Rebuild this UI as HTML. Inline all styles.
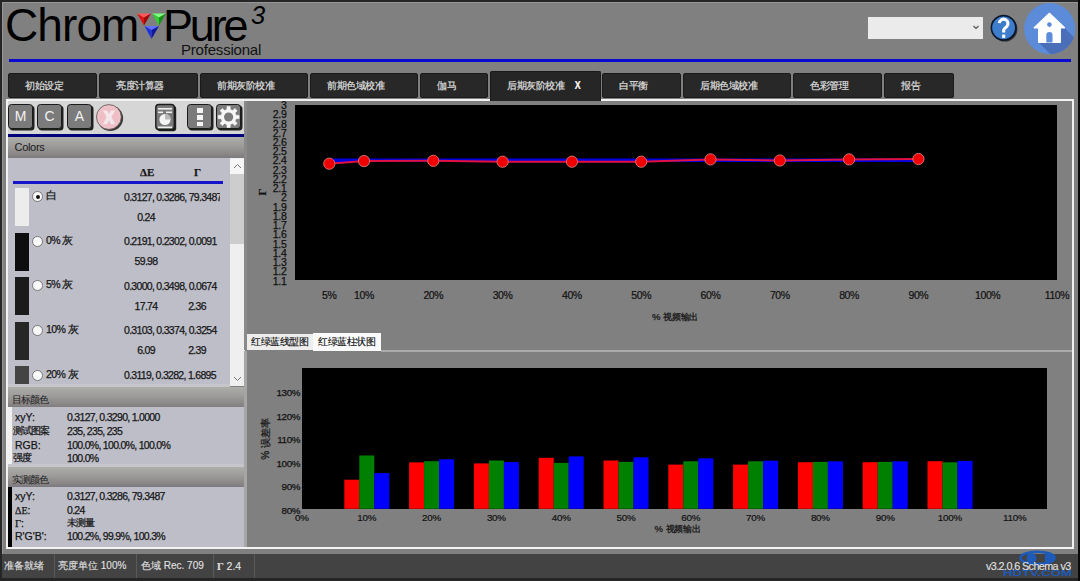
<!DOCTYPE html><html><head><meta charset="utf-8"><style>
*{margin:0;padding:0;box-sizing:border-box}
html,body{width:1080px;height:581px;overflow:hidden;background:#262626;font-family:"Liberation Sans",sans-serif}
.a{position:absolute}
.tab{position:absolute;top:73px;height:25px;background:#282828;border:1px solid #1a1a1a;border-radius:2px;color:#e2e2e2;font-size:10px;line-height:23px;padding-left:16px;white-space:nowrap;letter-spacing:-0.5px;-webkit-text-stroke:0.2px #d8d8d8}
.tab.sel{top:71px;height:29.5px;line-height:27px;background:#262626;z-index:5;border-bottom:none;border-radius:2px 2px 0 0}
.hdr{position:absolute;left:8px;width:237px;height:21px;background:linear-gradient(#adada9 0%,#9c9b9a 45%,#8a8686 82%,#7c7a80 100%);font-size:9.8px;color:#1a1a1a;line-height:25px;padding-left:4px;letter-spacing:-1.1px;white-space:nowrap}
.btn{position:absolute;top:104px;width:25px;height:25px;background:#7b7b7b;border:1.3px solid #1a1a1a;border-radius:3.5px;box-shadow:1.5px 1.5px 0.5px rgba(0,0,0,.85);color:#f2f2f2;font-size:14px;text-align:center;line-height:23px}
.lbl{position:absolute;font-size:10.5px;color:#161616;white-space:nowrap;line-height:12px;-webkit-text-stroke:0.25px #161616}
.num{letter-spacing:-0.7px}
.radio{position:absolute;left:24px;width:11px;height:11px;border-radius:50%;background:#fafafa;border:1px solid #777}
.radio.on::after{content:"";position:absolute;left:2.5px;top:2.5px;width:4px;height:4px;border-radius:50%;background:#111}
.yl{position:absolute;text-align:right;font-size:10.5px;color:#111;line-height:10px;white-space:nowrap;-webkit-text-stroke:0.25px #111}
.xl{position:absolute;width:40px;text-align:center;font-size:10px;color:#111;line-height:10px;white-space:nowrap;-webkit-text-stroke:0.2px #111}
.st{position:absolute;top:554px;height:24px;line-height:24px;color:#e2e2e2;font-size:10px;white-space:nowrap;-webkit-text-stroke:0.15px #d8d8d8}
.sep{position:absolute;top:554px;width:1px;height:24px;background:#5a5a5a}
</style></head><body>
<div class="a" style="left:2px;top:2px;width:1076px;height:552px;background:#808080;border-top:1px solid #969696;border-left:1px solid #969696"></div>
<div class="a" style="left:5px;top:-1px;font-size:46px;color:#000;line-height:52px;letter-spacing:-0.9px">Chrom</div>
<div class="a" style="left:163px;top:-0.5px;font-size:45px;color:#000;line-height:52px;letter-spacing:-3.2px">Pure</div>
<div class="a" style="left:251px;top:1px;font-size:25.5px;font-style:italic;color:#000;line-height:28px">3</div>
<div class="a" style="left:181px;top:41px;font-size:15px;color:#111;line-height:17px;letter-spacing:-0.2px">Professional</div>
<svg class="a" style="left:136px;top:12px" width="32" height="28" viewBox="0 0 32 28">
 <polygon points="1,1.5 15,1.5 8,5.5" fill="#ff5a5a"/><polygon points="1,1.5 8,5.5 8,13.5" fill="#e01414"/><polygon points="15,1.5 8,5.5 8,13.5" fill="#a00808"/>
 <polygon points="16,1.5 30,1.5 23,5.5" fill="#80ff80"/><polygon points="16,1.5 23,5.5 23,13.5" fill="#30d030"/><polygon points="30,1.5 23,5.5 23,13.5" fill="#189018"/>
 <polygon points="8.5,14 23,14 15.5,18" fill="#6070ff"/><polygon points="8.5,14 15.5,18 15.5,27" fill="#2030e0"/><polygon points="23,14 15.5,18 15.5,27" fill="#1018a0"/>
</svg>
<div class="a" style="left:9px;top:59px;width:1062px;height:3px;background:#0a0ad0"></div>
<div class="a" style="left:868px;top:17px;width:115px;height:22px;background:#ebebeb"></div>
<svg class="a" style="left:971px;top:24px" width="10" height="7"><polyline points="2.5,2 5,4.5 7.5,2" fill="none" stroke="#555" stroke-width="1.2"/></svg>
<svg class="a" style="left:985px;top:8px" width="40" height="40" viewBox="0 0 40 40">
 <circle cx="19.8" cy="21" r="12.6" fill="#111" opacity=".75"/>
 <circle cx="18.6" cy="19.8" r="12.2" fill="#3e7ccc" stroke="#08182c" stroke-width="1.6"/>
 <path d="M14.2 15.2 A4.4 4.4 0 1 1 21.7 18.7 Q18.7 20.6 18.7 22.3 V24.6" fill="none" stroke="#fff" stroke-width="3.1"/>
 <rect x="17.15" y="26.6" width="3.1" height="3.3" fill="#fff"/>
</svg>
<svg class="a" style="left:1020px;top:0px" width="58" height="58" viewBox="0 0 58 58">
 <defs><clipPath id="hc"><circle cx="29.7" cy="28.7" r="25.6"/></clipPath></defs>
 <circle cx="29.7" cy="28.7" r="25.6" fill="#5b8bd9"/>
 <polygon clip-path="url(#hc)" points="40.3,27 44.6,28 84,67.4 58.6,82.3 18.6,42.3 40.3,42.3" fill="#4a6fb8"/>
 <polygon points="29.4,13.3 14.2,27.8 18.6,27.8 18.6,42.3 40.3,42.3 40.3,27.8 44.6,27.8" fill="#fff" stroke="#fff" stroke-width="1.2" stroke-linejoin="round"/>
 <path d="M26.3 42.6 V35 a3.1 3.1 0 0 1 6.2 0 V42.6 Z" fill="#5b8bd9"/>
 <circle cx="29.4" cy="24.6" r="2.3" fill="#5b8bd9"/>
</svg>
<div class="tab" style="left:8px;width:89px">初始设定</div>
<div class="tab" style="left:99px;width:99px">亮度计算器</div>
<div class="tab" style="left:200px;width:108px">前期灰阶校准</div>
<div class="tab" style="left:310px;width:108px">前期色域校准</div>
<div class="tab" style="left:420px;width:68px">伽马</div>
<div class="tab sel" style="left:490px;width:111px">后期灰阶校准 <b style="font-size:11px;margin-left:8px;color:#fff;display:inline-block;transform:scaleX(.8);-webkit-text-stroke:0.2px #fff">X</b></div>
<div class="tab" style="left:602px;width:79px">白平衡</div>
<div class="tab" style="left:683px;width:108px">后期色域校准</div>
<div class="tab" style="left:793px;width:89px">色彩管理</div>
<div class="tab" style="left:884px;width:70px">报告</div>
<div class="a" style="left:6px;top:99px;width:1068px;height:450px;border:2px solid #f2f2f2;background:#808080"></div>
<div class="a" style="left:8px;top:101px;width:237px;height:33px;background:#d6d6d6"></div>
<div class="btn" style="left:8px">M</div><div class="btn" style="left:37px">C</div><div class="btn" style="left:67px">A</div>
<svg class="a" style="left:94px;top:102px" width="32" height="32" viewBox="0 0 32 32">
 <circle cx="16.3" cy="16.3" r="12.8" fill="#111" opacity=".8"/>
 <circle cx="14.9" cy="15" r="12.4" fill="#eec2c8" stroke="#5a4e4e" stroke-width="0.8"/>
 <circle cx="14.9" cy="15" r="9" fill="#f0b8c0" opacity=".5"/>
 <path d="M8.8 8.6 H13 L15 12 L17 8.6 H21.2 L17.4 15 L21.2 22.2 H17 L15 18.2 L13 22.2 H8.8 L12.6 15 Z" fill="#f2ecee" opacity=".9"/>
</svg>
<svg class="a" style="left:154px;top:102px" width="24" height="31" viewBox="0 0 24 31">
 <rect x="3.2" y="3.8" width="19" height="25.5" rx="3" fill="#000" opacity=".85"/>
 <rect x="1.8" y="2.5" width="18.5" height="25" rx="3" fill="#7a7a7a" stroke="#1a1a1a" stroke-width="1.4"/>
 <rect x="4" y="6" width="14" height="1.6" fill="#eee"/><rect x="4" y="9.5" width="5" height="1.6" fill="#eee"/><rect x="12" y="9.5" width="6" height="1.6" fill="#eee"/>
 <circle cx="11" cy="17.5" r="5.6" fill="#f4f4f4"/><path d="M11 17.5 V11.9 A5.6 5.6 0 0 1 16.6 17.5 Z" fill="#b8b8b8"/>
 <rect x="4" y="24.5" width="14" height="1.6" fill="#eee"/>
</svg>
<div class="btn" style="left:187px"></div>
<div class="a" style="left:197px;top:108px;width:5.5px;height:4.5px;background:#f4f4f4"></div><div class="a" style="left:197px;top:115px;width:5.5px;height:4.5px;background:#f4f4f4"></div><div class="a" style="left:197px;top:121.5px;width:5.5px;height:4.5px;background:#f4f4f4"></div>
<div class="btn" style="left:216px"></div>
<svg class="a" style="left:210px;top:98px" width="40" height="40" viewBox="0 0 40 40">
 <polygon points="16.94,11.58 17.02,8.52 20.18,8.52 20.26,11.58 22.67,12.58 24.89,10.47 27.13,12.71 25.02,14.93 26.02,17.34 29.08,17.42 29.08,20.58 26.02,20.66 25.02,23.07 27.13,25.29 24.89,27.53 22.67,25.42 20.26,26.42 20.18,29.48 17.02,29.48 16.94,26.42 14.53,25.42 12.31,27.53 10.07,25.29 12.18,23.07 11.18,20.66 8.12,20.58 8.12,17.42 11.18,17.34 12.18,14.93 10.07,12.71 12.31,10.47 14.53,12.58" fill="#f6f6f6" stroke="#f6f6f6" stroke-width="0.6" stroke-linejoin="round"/>
 <circle cx="18.6" cy="19" r="4.6" fill="#7a7a7a"/>
</svg>
<div class="a" style="left:8px;top:134px;width:237px;height:3px;background:#00007a"></div>
<div class="hdr" style="top:137px;font-size:11px;padding-left:6.5px;line-height:21px;letter-spacing:-0.3px">Colors</div>
<div class="a" style="left:8px;top:158px;width:222px;height:228px;background:#bebec8;overflow:hidden"><div class="a" style="left:5px;top:23px;width:210px;height:3px;background:#1414c8"></div><div class="lbl" style="left:132px;top:8px;font-family:Liberation Serif;font-weight:bold;font-size:11px">ΔE</div><div class="lbl" style="left:186px;top:8px;font-family:Liberation Serif;font-weight:bold;font-size:11px">Γ</div><div class="a" style="left:7px;top:30.0px;width:14px;height:38px;background:#ececec"></div><div class="radio on" style="top:33.1px"></div><div class="lbl" style="left:38px;top:31.1px;letter-spacing:-0.6px">白</div><div class="a" style="left:110px;top:32.6px;width:102px;height:13px;overflow:hidden"><div class="lbl num" style="left:6px;top:0">0.3127, 0.3286, 79.3487</div></div><div class="lbl num" style="left:108px;width:60px;text-align:center;top:52.6px">0.24</div><div class="a" style="left:7px;top:74.6px;width:14px;height:38px;background:#0e0e0e"></div><div class="radio" style="top:77.7px"></div><div class="lbl" style="left:38px;top:75.7px;letter-spacing:-0.6px">0% 灰</div><div class="a" style="left:110px;top:77.2px;width:102px;height:13px;overflow:hidden"><div class="lbl num" style="left:6px;top:0">0.2191, 0.2302, 0.0091</div></div><div class="lbl num" style="left:108px;width:60px;text-align:center;top:97.2px">59.98</div><div class="a" style="left:7px;top:119.2px;width:14px;height:38px;background:#1b1b1b"></div><div class="radio" style="top:122.3px"></div><div class="lbl" style="left:38px;top:120.3px;letter-spacing:-0.6px">5% 灰</div><div class="a" style="left:110px;top:121.8px;width:102px;height:13px;overflow:hidden"><div class="lbl num" style="left:6px;top:0">0.3000, 0.3498, 0.0674</div></div><div class="lbl num" style="left:108px;width:60px;text-align:center;top:141.8px">17.74</div><div class="lbl num" style="left:159px;width:60px;text-align:center;top:141.8px">2.36</div><div class="a" style="left:7px;top:163.8px;width:14px;height:38px;background:#262626"></div><div class="radio" style="top:166.9px"></div><div class="lbl" style="left:38px;top:164.9px;letter-spacing:-0.6px">10% 灰</div><div class="a" style="left:110px;top:166.4px;width:102px;height:13px;overflow:hidden"><div class="lbl num" style="left:6px;top:0">0.3103, 0.3374, 0.3254</div></div><div class="lbl num" style="left:108px;width:60px;text-align:center;top:186.4px">6.09</div><div class="lbl num" style="left:159px;width:60px;text-align:center;top:186.4px">2.39</div><div class="a" style="left:7px;top:208.4px;width:14px;height:38px;background:#444444"></div><div class="radio" style="top:211.5px"></div><div class="lbl" style="left:38px;top:209.5px;letter-spacing:-0.6px">20% 灰</div><div class="a" style="left:110px;top:211.0px;width:102px;height:13px;overflow:hidden"><div class="lbl num" style="left:6px;top:0">0.3119, 0.3282, 1.6895</div></div></div>
<div class="a" style="left:230px;top:158px;width:15px;height:228px;background:#efefef"></div>
<div class="a" style="left:230px;top:174px;width:15px;height:70px;background:#cdcdcd"></div>
<div class="a" style="left:230px;top:159px;width:15px;height:15px;background:#f6f6f6"></div>
<svg class="a" style="left:232px;top:162px" width="11" height="8"><polyline points="2,6 5.5,2.5 9,6" fill="none" stroke="#777" stroke-width="1"/></svg>
<svg class="a" style="left:232px;top:375px" width="11" height="8"><polyline points="2,2 5.5,5.5 9,2" fill="none" stroke="#777" stroke-width="1"/></svg>
<div class="a" style="left:8px;top:384px;width:222px;height:3px;background:#c6c6ca"></div>
<div class="hdr" style="top:387px;height:20.5px">目标颜色</div>
<div class="a" style="left:8px;top:407px;width:237px;height:58px;background:#bebec8"></div>
<div class="a" style="left:8px;top:407px;width:4px;height:57px;background:#f0f0f0"></div>
<div class="lbl" style="left:15px;top:410.7px;">xyY:</div><div class="lbl num" style="left:67px;top:410.7px;">0.3127, 0.3290, 1.0000</div>
<div class="lbl" style="left:15px;top:424.6px;font-size:10px;letter-spacing:-0.9px;margin-left:-2px">测试图案</div><div class="lbl num" style="left:67px;top:424.6px;">235, 235, 235</div>
<div class="lbl" style="left:15px;top:438.5px;">RGB:</div><div class="lbl num" style="left:67px;top:438.5px;">100.0%, 100.0%, 100.0%</div>
<div class="lbl" style="left:15px;top:452.4px;font-size:10px;letter-spacing:-0.9px;margin-left:-2px">强度</div><div class="lbl num" style="left:67px;top:452.4px;">100.0%</div>
<div class="a" style="left:8px;top:464px;width:237px;height:3px;background:#c6c6ca"></div>
<div class="hdr" style="top:466.5px;height:20.5px">实测颜色</div>
<div class="a" style="left:8px;top:487px;width:237px;height:60px;background:#bebec8"></div>
<div class="a" style="left:8px;top:487px;width:4px;height:60px;background:#000"></div>
<div class="lbl" style="left:15px;top:490.3px;">xyY:</div><div class="lbl num" style="left:67px;top:490.3px;">0.3127, 0.3286, 79.3487</div>
<div class="lbl" style="left:15px;top:503.6px;"><span style='font-family:Liberation Serif;font-size:10px'>ΔE</span>:</div><div class="lbl num" style="left:67px;top:503.6px;">0.24</div>
<div class="lbl" style="left:15px;top:516.9px;"><span style='font-family:Liberation Serif;font-size:10.5px'>Γ</span>:</div><div class="lbl num" style="left:67px;top:516.9px;font-size:10px;letter-spacing:-0.9px">未测量</div>
<div class="lbl" style="left:15px;top:530.2px;">R'G'B':</div><div class="lbl num" style="left:67px;top:530.2px;">100.2%, 99.9%, 100.3%</div>
<div class="a" style="left:295px;top:105px;width:762px;height:175px;background:#000"></div>
<div class="yl" style="left:236.5px;width:50px;top:100.0px;letter-spacing:-0.3px">3</div>
<div class="yl" style="left:236.5px;width:50px;top:109.2px;letter-spacing:-0.3px">2.9</div>
<div class="yl" style="left:236.5px;width:50px;top:118.5px;letter-spacing:-0.3px">2.8</div>
<div class="yl" style="left:236.5px;width:50px;top:127.7px;letter-spacing:-0.3px">2.7</div>
<div class="yl" style="left:236.5px;width:50px;top:137.0px;letter-spacing:-0.3px">2.6</div>
<div class="yl" style="left:236.5px;width:50px;top:146.2px;letter-spacing:-0.3px">2.5</div>
<div class="yl" style="left:236.5px;width:50px;top:155.4px;letter-spacing:-0.3px">2.4</div>
<div class="yl" style="left:236.5px;width:50px;top:164.7px;letter-spacing:-0.3px">2.3</div>
<div class="yl" style="left:236.5px;width:50px;top:173.9px;letter-spacing:-0.3px">2.2</div>
<div class="yl" style="left:236.5px;width:50px;top:183.2px;letter-spacing:-0.3px">2.1</div>
<div class="yl" style="left:236.5px;width:50px;top:192.4px;letter-spacing:-0.3px">2</div>
<div class="yl" style="left:236.5px;width:50px;top:201.6px;letter-spacing:-0.3px">1.9</div>
<div class="yl" style="left:236.5px;width:50px;top:210.9px;letter-spacing:-0.3px">1.8</div>
<div class="yl" style="left:236.5px;width:50px;top:220.1px;letter-spacing:-0.3px">1.7</div>
<div class="yl" style="left:236.5px;width:50px;top:229.4px;letter-spacing:-0.3px">1.6</div>
<div class="yl" style="left:236.5px;width:50px;top:238.6px;letter-spacing:-0.3px">1.5</div>
<div class="yl" style="left:236.5px;width:50px;top:247.8px;letter-spacing:-0.3px">1.4</div>
<div class="yl" style="left:236.5px;width:50px;top:257.1px;letter-spacing:-0.3px">1.3</div>
<div class="yl" style="left:236.5px;width:50px;top:266.3px;letter-spacing:-0.3px">1.2</div>
<div class="yl" style="left:236.5px;width:50px;top:275.6px;letter-spacing:-0.3px">1.1</div>
<div class="xl" style="left:309.3px;top:290px;font-size:10.5px;letter-spacing:-0.4px">5%</div>
<div class="xl" style="left:344.0px;top:290px;font-size:10.5px;letter-spacing:-0.4px">10%</div>
<div class="xl" style="left:413.3px;top:290px;font-size:10.5px;letter-spacing:-0.4px">20%</div>
<div class="xl" style="left:482.6px;top:290px;font-size:10.5px;letter-spacing:-0.4px">30%</div>
<div class="xl" style="left:551.9px;top:290px;font-size:10.5px;letter-spacing:-0.4px">40%</div>
<div class="xl" style="left:621.2px;top:290px;font-size:10.5px;letter-spacing:-0.4px">50%</div>
<div class="xl" style="left:690.5px;top:290px;font-size:10.5px;letter-spacing:-0.4px">60%</div>
<div class="xl" style="left:759.8px;top:290px;font-size:10.5px;letter-spacing:-0.4px">70%</div>
<div class="xl" style="left:829.1px;top:290px;font-size:10.5px;letter-spacing:-0.4px">80%</div>
<div class="xl" style="left:898.4px;top:290px;font-size:10.5px;letter-spacing:-0.4px">90%</div>
<div class="xl" style="left:967.7px;top:290px;font-size:10.5px;letter-spacing:-0.4px">100%</div>
<div class="xl" style="left:1037.0px;top:290px;font-size:10.5px;letter-spacing:-0.4px">110%</div>
<div class="lbl" style="left:652px;top:310.5px;font-size:9.5px;color:#111">% <span style="font-size:9px;letter-spacing:-0.2px">视频输出</span></div>
<div class="lbl" style="left:258px;top:185.5px;font-family:Liberation Serif;font-weight:bold;font-size:11px;transform:rotate(-90deg);color:#111">Γ</div>
<svg class="a" style="left:0;top:0" width="1080" height="581"><line x1="329.3" y1="160.3" x2="918.4" y2="160.3" stroke="#0000e0" stroke-width="3.5"/><polyline points="329.3,163.7 364.0,161.1 433.3,160.8 502.6,161.7 571.9,161.7 641.2,161.7 710.5,159.4 779.8,160.5 849.1,159.4 918.4,159.0" fill="none" stroke="#e01040" stroke-width="2"/><circle cx="329.3" cy="163.7" r="5.6" fill="#f00000" stroke="#d87070" stroke-width="1"/><circle cx="364.0" cy="161.1" r="5.6" fill="#f00000" stroke="#d87070" stroke-width="1"/><circle cx="433.3" cy="160.8" r="5.6" fill="#f00000" stroke="#d87070" stroke-width="1"/><circle cx="502.6" cy="161.7" r="5.6" fill="#f00000" stroke="#d87070" stroke-width="1"/><circle cx="571.9" cy="161.7" r="5.6" fill="#f00000" stroke="#d87070" stroke-width="1"/><circle cx="641.2" cy="161.7" r="5.6" fill="#f00000" stroke="#d87070" stroke-width="1"/><circle cx="710.5" cy="159.4" r="5.6" fill="#f00000" stroke="#d87070" stroke-width="1"/><circle cx="779.8" cy="160.5" r="5.6" fill="#f00000" stroke="#d87070" stroke-width="1"/><circle cx="849.1" cy="159.4" r="5.6" fill="#f00000" stroke="#d87070" stroke-width="1"/><circle cx="918.4" cy="159.0" r="5.6" fill="#f00000" stroke="#d87070" stroke-width="1"/></svg>
<div class="a" style="left:247px;top:334px;width:66px;height:16px;background:#ededed;font-size:10px;line-height:16px;padding-left:4px;color:#111;letter-spacing:-0.5px;-webkit-text-stroke:0.15px #111">红绿蓝线型图</div>
<div class="a" style="left:313px;top:333px;width:68px;height:18px;background:#fafafa;font-size:10px;line-height:18px;padding-left:5px;color:#111;letter-spacing:-0.5px;-webkit-text-stroke:0.15px #111">红绿蓝柱状图</div>
<div class="a" style="left:381px;top:350px;width:691px;height:1.5px;background:#aaaaaa"></div>
<div class="a" style="left:244px;top:101px;width:3px;height:249px;background:#8a8a8a"></div>
<div class="a" style="left:244px;top:351px;width:3px;height:196px;background:#a6a6a6"></div>
<div class="a" style="left:302px;top:368px;width:745px;height:141px;background:#000"></div>
<div class="yl" style="left:250px;width:50px;top:388.3px;font-size:9.8px;letter-spacing:-0.4px">130%</div>
<div class="yl" style="left:250px;width:50px;top:411.8px;font-size:9.8px;letter-spacing:-0.4px">120%</div>
<div class="yl" style="left:250px;width:50px;top:435.3px;font-size:9.8px;letter-spacing:-0.4px">110%</div>
<div class="yl" style="left:250px;width:50px;top:458.8px;font-size:9.8px;letter-spacing:-0.4px">100%</div>
<div class="yl" style="left:250px;width:50px;top:482.3px;font-size:9.8px;letter-spacing:-0.4px">90%</div>
<div class="yl" style="left:250px;width:50px;top:505.8px;font-size:9.8px;letter-spacing:-0.4px">80%</div>
<div class="xl" style="left:282.0px;top:513px;font-size:9.8px;letter-spacing:-0.2px">0%</div>
<div class="xl" style="left:346.8px;top:513px;font-size:9.8px;letter-spacing:-0.2px">10%</div>
<div class="xl" style="left:411.6px;top:513px;font-size:9.8px;letter-spacing:-0.2px">20%</div>
<div class="xl" style="left:476.4px;top:513px;font-size:9.8px;letter-spacing:-0.2px">30%</div>
<div class="xl" style="left:541.2px;top:513px;font-size:9.8px;letter-spacing:-0.2px">40%</div>
<div class="xl" style="left:606.0px;top:513px;font-size:9.8px;letter-spacing:-0.2px">50%</div>
<div class="xl" style="left:670.8px;top:513px;font-size:9.8px;letter-spacing:-0.2px">60%</div>
<div class="xl" style="left:735.6px;top:513px;font-size:9.8px;letter-spacing:-0.2px">70%</div>
<div class="xl" style="left:800.4px;top:513px;font-size:9.8px;letter-spacing:-0.2px">80%</div>
<div class="xl" style="left:865.2px;top:513px;font-size:9.8px;letter-spacing:-0.2px">90%</div>
<div class="xl" style="left:930.0px;top:513px;font-size:9.8px;letter-spacing:-0.2px">100%</div>
<div class="xl" style="left:994.8px;top:513px;font-size:9.8px;letter-spacing:-0.2px">110%</div>
<div class="lbl" style="left:654.5px;top:522.5px;font-size:9.5px;color:#111">% <span style="font-size:9px;letter-spacing:-0.2px">视频输出</span></div>
<div class="lbl" style="left:244.5px;top:433px;font-size:10px;transform:rotate(-90deg);color:#111">% 误差率</div>
<svg class="a" style="left:0;top:0" width="1080" height="581"><rect x="344.3" y="479.7" width="15" height="29.1" fill="#ff0000"/><rect x="359.3" y="455.5" width="15" height="53.3" fill="#008000"/><rect x="374.3" y="473.1" width="15" height="35.7" fill="#0000ff"/><rect x="409.1" y="462.4" width="15" height="46.4" fill="#ff0000"/><rect x="424.1" y="461.2" width="15" height="47.6" fill="#008000"/><rect x="439.1" y="459.3" width="15" height="49.5" fill="#0000ff"/><rect x="473.9" y="463.4" width="15" height="45.4" fill="#ff0000"/><rect x="488.9" y="460.5" width="15" height="48.3" fill="#008000"/><rect x="503.9" y="462.1" width="15" height="46.7" fill="#0000ff"/><rect x="538.7" y="457.8" width="15" height="51.0" fill="#ff0000"/><rect x="553.7" y="462.9" width="15" height="45.9" fill="#008000"/><rect x="568.7" y="456.4" width="15" height="52.4" fill="#0000ff"/><rect x="603.5" y="460.5" width="15" height="48.3" fill="#ff0000"/><rect x="618.5" y="461.9" width="15" height="46.9" fill="#008000"/><rect x="633.5" y="457.3" width="15" height="51.5" fill="#0000ff"/><rect x="668.3" y="464.6" width="15" height="44.2" fill="#ff0000"/><rect x="683.3" y="461.3" width="15" height="47.5" fill="#008000"/><rect x="698.3" y="458.3" width="15" height="50.5" fill="#0000ff"/><rect x="733.1" y="464.6" width="15" height="44.2" fill="#ff0000"/><rect x="748.1" y="461.3" width="15" height="47.5" fill="#008000"/><rect x="763.1" y="460.7" width="15" height="48.1" fill="#0000ff"/><rect x="797.9" y="462.2" width="15" height="46.6" fill="#ff0000"/><rect x="812.9" y="461.9" width="15" height="46.9" fill="#008000"/><rect x="827.9" y="461.3" width="15" height="47.5" fill="#0000ff"/><rect x="862.7" y="462.2" width="15" height="46.6" fill="#ff0000"/><rect x="877.7" y="461.9" width="15" height="46.9" fill="#008000"/><rect x="892.7" y="461.3" width="15" height="47.5" fill="#0000ff"/><rect x="927.5" y="461.2" width="15" height="47.6" fill="#ff0000"/><rect x="942.5" y="462.3" width="15" height="46.5" fill="#008000"/><rect x="957.5" y="460.9" width="15" height="47.9" fill="#0000ff"/></svg>
<div class="a" style="left:2px;top:554px;width:1076px;height:24px;background:#434343"></div>
<div class="st" style="left:4px">准备就绪</div><div class="sep" style="left:54px"></div>
<div class="st" style="left:58px">亮度单位 100%</div><div class="sep" style="left:136px"></div>
<div class="st" style="left:141px">色域 Rec. 709</div><div class="sep" style="left:213px"></div>
<div class="st" style="left:217px;font-size:10.5px"><span style="font-family:Liberation Serif;font-weight:bold">Γ</span> 2.4</div><div class="sep" style="left:254px"></div>
<svg class="a" style="left:1000px;top:548px" width="80" height="33" viewBox="0 0 80 33">
 <ellipse cx="37.5" cy="9.9" rx="17" ry="6.2" fill="none" stroke="#1e5ab8" stroke-width="2.6"/>
 <circle cx="31.5" cy="10.2" r="5" fill="#1e5ab8"/>
 <path d="M44 3.6 A11.5 6.3 0 0 1 44 16.2 A8 6.3 0 0 0 44 3.6 Z" fill="#1e5ab8"/>
 <path d="M45 4 A10.5 6 0 0 1 45 15.8 L45 4 Z" fill="#1e5ab8"/>
 <text x="3" y="27.6" font-family="Liberation Sans" font-weight="bold" font-size="9.6" fill="#1e5ab8" textLength="69" lengthAdjust="spacingAndGlyphs">HDTV.COM</text>
</svg>
<div class="st" style="left:986px;letter-spacing:-0.6px;font-size:10.8px">v3.2.0.6 Schema v3</div>
<div class="a" style="left:1078px;top:0;width:2px;height:581px;background:#080808"></div>
</body></html>
